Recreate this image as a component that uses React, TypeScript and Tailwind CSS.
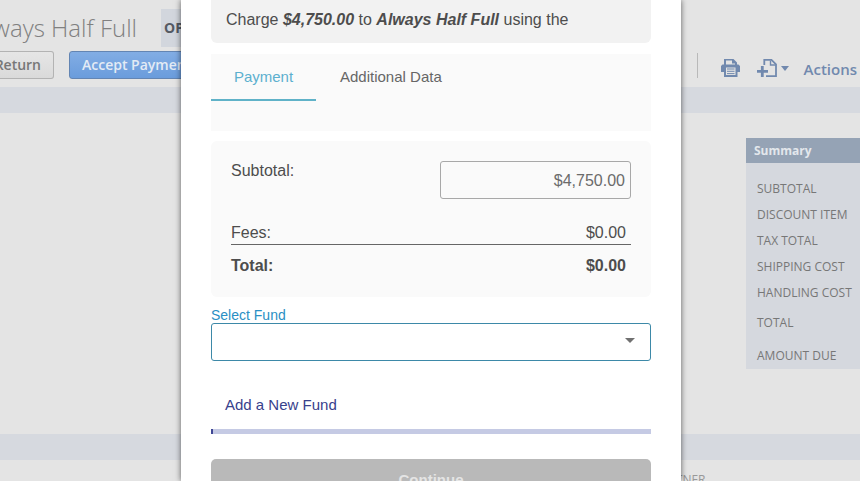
import React from 'react'

interface SummaryRow {
  label: string
  spacing?: string
}

const summaryRows: SummaryRow[] = [
  { label: 'SUBTOTAL' },
  { label: 'DISCOUNT ITEM' },
  { label: 'TAX TOTAL' },
  { label: 'SHIPPING COST' },
  { label: 'HANDLING COST' },
  { label: 'TOTAL', spacing: 'mt-1' },
  { label: 'AMOUNT DUE', spacing: 'mt-[7px]' },
]

const PrintIcon: React.FC = () => (
  <svg width="20" height="20" viewBox="0 0 20 20" fill="none" aria-hidden="true">
    <path d="M3 7V1h9.500L16 4.500V7h-2V5.500h-3V2.500H5V7z" fill="#7189ae" />
    <path d="M1.500 6.500h16L19 8v6h-2.500v5H3v-5H0V8z" fill="#7189ae" />
    <path d="M5 9.500h9.500V17H5z" fill="#e4e4e4" />
    <path d="M6 11h7.500M6 13.300h7.500M6 15.600h7.500" stroke="#7189ae" strokeWidth="1" />
  </svg>
)

const NewFileIcon: React.FC = () => (
  <svg width="20" height="20" viewBox="0 0 20 20" fill="none" aria-hidden="true">
    <path d="M7.300 7V1.900H14.500L19 6.400V18.100H9" stroke="#7189ae" strokeWidth="1.800" />
    <path d="M13.500 2.500V7H18.500" stroke="#7189ae" strokeWidth="1.400" />
    <path d="M0 13.300h11M5.300 8v11" stroke="#7189ae" strokeWidth="2.800" />
  </svg>
)

const PageHeader: React.FC = () => (
  <header className="flex h-[87px] justify-between">
    <div>
      <div className="flex h-[47px] items-end">
        <h1 className="flex h-[38px] w-[137px] items-center justify-end whitespace-nowrap text-2xl font-light text-[#808080]">
          Always Half Full
        </h1>
        <span className="ml-6 flex h-[38px] items-center bg-[#d2d6dd] px-[3px] text-sm font-bold text-[#555a63]">
          OPEN
        </span>
      </div>
      <div className="mt-1 flex">
        <button
          type="button"
          className="flex h-7 w-[54px] items-center justify-end rounded-r-[3px] border border-l-0 border-[#b3b3b3] bg-linear-to-b from-[#e6e6e6] to-[#dadada] pr-3 text-sm font-semibold text-[#777]"
        >
          Return
        </button>
        <button
          type="button"
          className="ml-[15px] h-7 rounded-[3px] border border-[#6385b3] bg-linear-to-b from-[#82ade4] to-[#6a9cdc] px-3 text-sm font-semibold text-[#e3ebf5]"
        >
          Accept Payment
        </button>
      </div>
    </div>
    <div className="mr-[3px] mt-[50px] flex h-9 items-center">
      <span className="mt-[3px] mr-[23px] h-[25px] w-px self-start bg-[#b9b9b9]" />
      <button type="button" aria-label="Print">
        <PrintIcon />
      </button>
      <button type="button" aria-label="New" className="ml-4 flex items-center">
        <NewFileIcon />
        <svg width="8" height="5" viewBox="0 0 8 5" className="ml-1" aria-hidden="true">
          <path d="M0 0h8L4 5z" fill="#7189ae" />
        </svg>
      </button>
      <a href="#actions" className="ml-[15px] pt-0.5 text-[15px] font-semibold text-[#7189ae]">
        Actions
      </a>
    </div>
  </header>
)

const OrderSummary: React.FC = () => (
  <section className="w-[114px] bg-[#d5d8de]">
    <h2 className="h-[25px] bg-[#95a3b5] pl-2 text-xs leading-[25px] font-bold text-[#e3e7ec]">Summary</h2>
    <ul className="pt-[13px] pl-[11px] text-xs whitespace-nowrap text-[#777]">
      {summaryRows.map(({ label, spacing }) => (
        <li key={label} className={`leading-[26px] ${spacing ?? ''}`}>
          {label}
        </li>
      ))}
    </ul>
  </section>
)

const PaymentTabs: React.FC = () => (
  <div className="mt-[11px] h-[77px] bg-[#fafafa]">
    <div role="tablist" className="flex h-[47px] text-[15px]">
      <button
        type="button"
        role="tab"
        aria-selected="true"
        className="w-[105px] border-b-2 border-[#5fb2c8] pt-0.5 text-[#5cb0cf]"
      >
        Payment
      </button>
      <button
        type="button"
        role="tab"
        aria-selected="false"
        className="border-b-2 border-transparent px-6 pt-0.5 text-[#666]"
      >
        Additional Data
      </button>
    </div>
  </div>
)

const Totals: React.FC = () => (
  <section className="mt-2.5 rounded-md bg-[#fafafa] p-5">
    <div className="flex justify-between">
      <label htmlFor="subtotal" className="leading-5">
        Subtotal:
      </label>
      <input
        id="subtotal"
        type="text"
        defaultValue="$4,750.00"
        className="h-[38px] w-[191px] rounded-[3px] border border-[#a8a8a8] px-[5px] pt-0.5 text-right text-[#6b6b6b]"
      />
    </div>
    <div className="mt-[23px] flex justify-between border-b border-[#666] pr-[5px] leading-[22px]">
      <span>Fees:</span>
      <span>$0.00</span>
    </div>
    <div className="mt-2.5 flex justify-between pr-[5px] leading-[22px] font-bold">
      <span>Total:</span>
      <span>$0.00</span>
    </div>
  </section>
)

const PaymentDialog: React.FC = () => (
  <div
    role="dialog"
    aria-label="Accept payment"
    className="w-[500px] bg-white px-[30px] font-['Liberation_Sans',Arial,sans-serif] text-base text-[#4d4d4d] shadow-[0_0_6px_rgba(0,0,0,0.6)]"
  >
    <p className="h-[43px] rounded-b-md bg-[#f2f2f2] px-[15px] leading-10">
      Charge <strong className="italic">$4,750.00</strong> to <strong className="italic">Always Half Full</strong> using
      the
    </p>
    <PaymentTabs />
    <Totals />
    <label htmlFor="fund" className="mt-2.5 block text-sm leading-4 text-[#2a8fc4]">
      Select Fund
    </label>
    <div className="relative">
      <select
        id="fund"
        defaultValue=""
        className="block h-[38px] w-full appearance-none rounded-[3px] border border-[#3d89a8] bg-white px-3"
      >
        <option value="" />
      </select>
      <svg
        width="10"
        height="5"
        viewBox="0 0 10 5"
        className="pointer-events-none absolute top-[15px] right-4"
        aria-hidden="true"
      >
        <path d="M0 0h10L5 5z" fill="#707070" />
      </svg>
    </div>
    <button type="button" className="mt-[26px] block h-9 px-3.5 text-[15px] text-[#38418c]">
      Add a New Fund
    </button>
    <div className="mt-1.5 h-[5px] border-l-2 border-[#3f4795] bg-[#c5cae4]" />
    <button
      type="button"
      className="mt-[25px] h-[42px] w-full rounded-[5px] bg-[#b9b9b9] text-[15px] font-bold text-[#e4e4e4]"
    >
      Continue
    </button>
  </div>
)

export default function App() {
  return (
    <div className="relative h-screen overflow-hidden bg-[#e4e4e4] font-['Open_Sans',sans-serif]">
      <PageHeader />
      <div className="h-[26px] bg-[#d6d9df]" />
      <main className="flex justify-end pt-[25px] pb-[65px]">
        <OrderSummary />
      </main>
      <div className="h-[26px] bg-[#d6d9df]" />
      <p className="ml-[76%] pt-3 text-xs text-[#999]">PARTNER</p>

      <div className="absolute inset-0 flex justify-center pl-0.5">
        <PaymentDialog />
      </div>
    </div>
  )
}
